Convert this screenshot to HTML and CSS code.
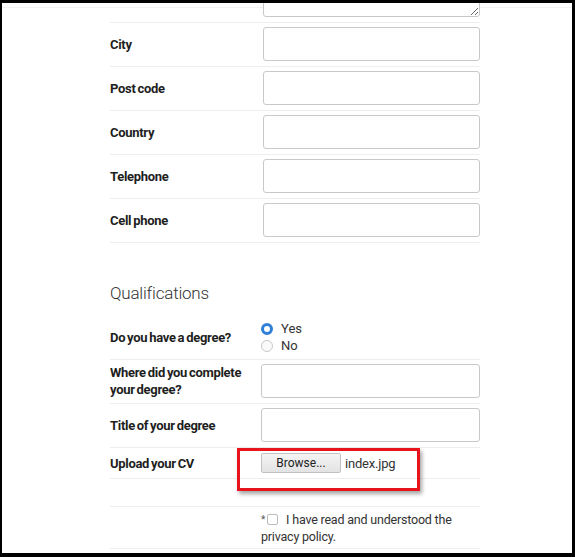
FILE: index.html
```html
<!DOCTYPE html>
<html lang="en">
<head>
    <meta charset="UTF-8">
    <meta name="viewport" content="width=device-width, initial-scale=1.0">
    <title>Application form</title>
    <link rel="stylesheet" href="styles.css">
</head>
<body>
    <div class="frame">
        <div class="topline"></div>
        <form class="form">
            <div class="row row-first">
                <span class="label"></span>
                <textarea class="field area"></textarea>
            </div>
            <div class="row">
                <label class="label" for="city">City</label>
                <input class="field" type="text" id="city">
            </div>
            <div class="row">
                <label class="label" for="postcode">Post code</label>
                <input class="field" type="text" id="postcode">
            </div>
            <div class="row">
                <label class="label" for="country">Country</label>
                <input class="field" type="text" id="country">
            </div>
            <div class="row">
                <label class="label" for="telephone">Telephone</label>
                <input class="field" type="text" id="telephone">
            </div>
            <div class="row row-end">
                <label class="label" for="cellphone">Cell phone</label>
                <input class="field" type="text" id="cellphone">
            </div>

            <h2 class="section">Qualifications</h2>

            <div class="row2 row-radio">
                <span class="label">Do you have a degree?</span>
                <div class="choices">
                    <label class="choice"><span class="radio checked"></span>Yes</label>
                    <label class="choice"><span class="radio"></span>No</label>
                </div>
            </div>
            <div class="row2">
                <label class="label" for="where">Where did you complete your degree?</label>
                <input class="field" type="text" id="where">
            </div>
            <div class="row2">
                <label class="label" for="title">Title of your degree</label>
                <input class="field" type="text" id="title">
            </div>
            <div class="row2 row-upload">
                <span class="label">Upload your CV</span>
                <div class="upload">
                    <span class="browse">Browse...</span>
                    <span class="filename">index.jpg</span>
                </div>
                <!-- marca roja de la captura -->
                <div class="highlight"></div>
            </div>
            <div class="row2 row-empty"></div>
            <div class="row2 row-privacy">
                <span class="label"></span>
                <div class="privacy">
                    <span class="star">*</span><span class="checkbox"></span><span class="ptext">I have read and understood the privacy policy.</span>
                </div>
            </div>
        </form>
    </div>
</body>
</html>
```

FILE: styles.css
```css
* {
    box-sizing: border-box;
}
body {
    margin: 0;
    font-family: "Roboto", "Liberation Sans", sans-serif;
    color: #222;
    background: #fff;
}
.frame {
    width: 575px;
    height: 557px;
    border-style: solid;
    border-color: #000;
    border-width: 3px 3px 4px 2px;
    overflow: hidden;
    position: relative;
}
.topline {
    height: 1px;
    margin-top: 4px;
    background: #f2f2f2;
}
.form {
    width: 370px;
    margin: -67px 0 0 108px;
}
.row {
    display: grid;
    grid-template-columns: 153px 217px;
    align-items: center;
    padding: 4px 0 5px;
    border-top: 1px solid #eee;
}
.row-first {
    border-top: none;
    padding-top: 0;
}
.row-end {
    border-bottom: 1px solid #eee;
}
.label {
    font-size: 13px;
    font-weight: bold;
    color: #1e1e1e;
    letter-spacing: -0.3px;
    word-spacing: -1px;
    line-height: 17px;
}
.field {
    display: block;
    width: 100%;
    height: 34px;
    margin: 0;
    border: 1px solid #c8c8c8;
    border-radius: 3px;
    background: #fff;
    font: inherit;
}
.area {
    height: 76px;
    resize: vertical;
}
.section {
    margin: 39px 0 0 0;
    font-size: 17px;
    font-weight: 300;
    color: #333;
    letter-spacing: -0.2px;
    line-height: 22px;
    height: 37px;
}
.row2 {
    display: grid;
    grid-template-columns: 151px 219px;
    align-items: center;
    padding: 4px 0 5px;
    border-bottom: 1px solid #eee;
    position: relative;
}
.row-radio {
    padding: 0 0 5px;
    margin-top: 1px;
}
.choices {
    display: flex;
    flex-direction: column;
}
.choice {
    display: flex;
    align-items: center;
    height: 17px;
    font-size: 13px;
    color: #333;
}
.radio {
    width: 12px;
    height: 12px;
    border-radius: 50%;
    border: 1px solid #c9c9c9;
    background: #fafafa;
    margin-right: 8px;
}
.radio.checked {
    border: 3px solid #2f7fd8;
    background: #fff;
}
.row-upload {
    height: 31px;
    padding: 0;
}
.upload {
    display: flex;
    align-items: center;
}
.browse {
    width: 80px;
    height: 20px;
    border: 1px solid #c2c2c2;
    border-radius: 2px;
    background: linear-gradient(#f4f4f4, #e3e3e3);
    font-size: 12px;
    color: #222;
    text-align: center;
    line-height: 18px;
    margin-right: 4px;
}
.filename {
    font-size: 13px;
    color: #333;
    letter-spacing: -0.2px;
}
.highlight {
    position: absolute;
    left: 127px;
    top: 0;
    width: 183px;
    height: 43px;
    border: 3px solid #e8141c;
    box-shadow: 2px 3px 4px rgba(0, 0, 0, 0.35);
}
.row-empty {
    height: 28px;
    padding: 0;
}
.row-privacy {
    padding: 4px 0 3px;
    align-items: start;
}
.privacy {
    font-size: 12.5px;
    color: #333;
    line-height: 17px;
    letter-spacing: -0.2px;
}
.star {
    font-size: 10px;
    vertical-align: top;
    color: #555;
    margin-right: 1px;
}
.checkbox {
    display: inline-block;
    width: 11px;
    height: 11px;
    border: 1px solid #bbb;
    border-radius: 2px;
    margin: 0 8px 0 1px;
    vertical-align: -1px;
}
```
